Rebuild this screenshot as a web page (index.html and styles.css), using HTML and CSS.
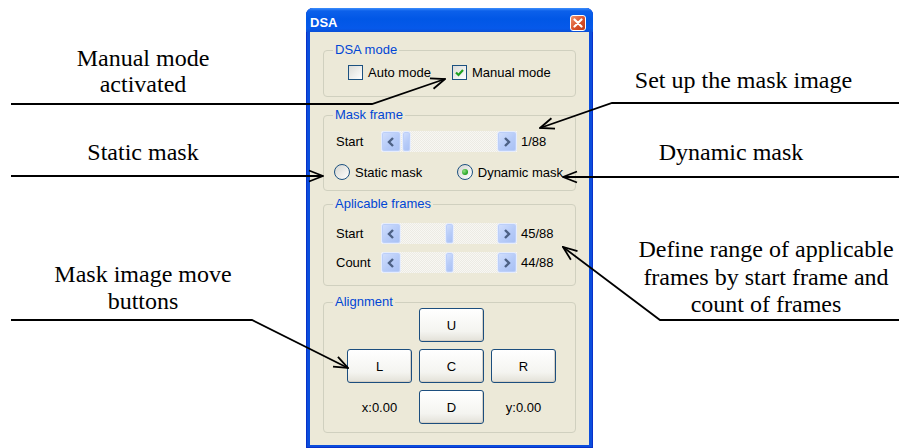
FILE: index.html
```html
<!DOCTYPE html>
<html>
<head>
	<title>DSA</title>
	<link rel="stylesheet" href="styles.css">
</head>
<body>
	<div class="page">

		<!-- Callouts on the left -->
		<div class="notes notes-left">
			<p class="note note-manual">Manual mode<br>activated</p>
			<p class="note note-static">Static mask</p>
			<p class="note note-buttons">Mask image move<br>buttons</p>
		</div>

		<!-- The DSA dialog -->
		<div class="window">
			<div class="titlebar">
				<span class="title">DSA</span>
				<span class="close">
					<svg width="10" height="10" viewBox="0 0 10 10"><path d="M1.5,1.5 L8.5,8.5 M8.5,1.5 L1.5,8.5" stroke="#fff" stroke-width="2.2" stroke-linecap="round"/></svg>
				</span>
			</div>

			<div class="client">
				<fieldset class="group group-mode">
					<legend>DSA mode</legend>
					<div class="check-row">
						<label class="check check-auto"><span class="box"></span>Auto mode</label>
						<label class="check"><span class="box"><svg width="13" height="13" viewBox="0 0 13 13"><path d="M3,6.5 L5.5,9 L10,4" fill="none" stroke="#21A121" stroke-width="2.2"/></svg></span>Manual mode</label>
					</div>
				</fieldset>

				<fieldset class="group group-mask">
					<legend>Mask frame</legend>
					<div class="scroll-row">
						<span class="scroll-label">Start</span>
						<div class="scroll">
							<span class="scroll-btn"><svg width="10" height="12" viewBox="0 0 10 12"><path d="M7,2 L3,6 L7,10" fill="none" stroke="#4D6185" stroke-width="2.4"/></svg></span>
							<span class="track"><span class="thumb" style="margin-left: 1px"></span></span>
							<span class="scroll-btn"><svg width="10" height="12" viewBox="0 0 10 12"><path d="M3,2 L7,6 L3,10" fill="none" stroke="#4D6185" stroke-width="2.4"/></svg></span>
						</div>
						<span class="scroll-value">1/88</span>
					</div>
					<div class="radio-row">
						<label class="radio radio-static"><span class="ring"></span>Static mask</label>
						<label class="radio"><span class="ring"><span class="dot"></span></span>Dynamic mask</label>
					</div>
				</fieldset>

				<fieldset class="group group-frames">
					<legend>Aplicable frames</legend>
					<div class="scroll-row">
						<span class="scroll-label">Start</span>
						<div class="scroll">
							<span class="scroll-btn"><svg width="10" height="12" viewBox="0 0 10 12"><path d="M7,2 L3,6 L7,10" fill="none" stroke="#4D6185" stroke-width="2.4"/></svg></span>
							<span class="track"><span class="thumb" style="margin-left: 44px"></span></span>
							<span class="scroll-btn"><svg width="10" height="12" viewBox="0 0 10 12"><path d="M3,2 L7,6 L3,10" fill="none" stroke="#4D6185" stroke-width="2.4"/></svg></span>
						</div>
						<span class="scroll-value">45/88</span>
					</div>
					<div class="scroll-row scroll-row-next">
						<span class="scroll-label">Count</span>
						<div class="scroll">
							<span class="scroll-btn"><svg width="10" height="12" viewBox="0 0 10 12"><path d="M7,2 L3,6 L7,10" fill="none" stroke="#4D6185" stroke-width="2.4"/></svg></span>
							<span class="track"><span class="thumb" style="margin-left: 44px"></span></span>
							<span class="scroll-btn"><svg width="10" height="12" viewBox="0 0 10 12"><path d="M3,2 L7,6 L3,10" fill="none" stroke="#4D6185" stroke-width="2.4"/></svg></span>
						</div>
						<span class="scroll-value">44/88</span>
					</div>
				</fieldset>

				<fieldset class="group group-align">
					<legend>Alignment</legend>
					<div class="pad">
						<button class="btn btn-up">U</button>
						<button class="btn btn-left">L</button>
						<button class="btn btn-center">C</button>
						<button class="btn btn-right">R</button>
						<span class="coord coord-x">x:0.00</span>
						<button class="btn btn-down">D</button>
						<span class="coord coord-y">y:0.00</span>
					</div>
				</fieldset>
			</div>
		</div>

		<!-- Callouts on the right -->
		<div class="notes notes-right">
			<p class="note note-mask">Set up the mask image</p>
			<p class="note note-dynamic">Dynamic mask</p>
			<p class="note note-range">Define range of applicable<br>frames by start frame and<br>count of frames</p>
		</div>
	</div>

	<!-- Arrows drawn over the page -->
	<svg class="arrows" width="899" height="448" viewBox="0 0 899 448">
		<defs>
			<marker id="head" markerUnits="userSpaceOnUse" markerWidth="16" markerHeight="14" viewBox="0 0 16 14" refX="15" refY="7" orient="auto">
				<path d="M1,1.5 L15,7 L1,12.5" fill="none" stroke="#000" stroke-width="1.8"/>
			</marker>
		</defs>
		<g fill="none" stroke="#000" stroke-width="1.8">
			<polyline points="11,104 372,104 445,79" marker-end="url(#head)"/>
			<polyline points="899,103 612,103 540,128" marker-end="url(#head)"/>
			<polyline points="11,176 323,176" marker-end="url(#head)"/>
			<polyline points="899,177 563,177" marker-end="url(#head)"/>
			<polyline points="899,320 660,320 563,247" marker-end="url(#head)"/>
			<polyline points="11,320 252,320 348,368" marker-end="url(#head)"/>
		</g>
	</svg>
</body>
</html>
```

FILE: styles.css
```css
body {
	margin: 0;
	width: 899px;
	height: 448px;
	overflow: hidden;
	position: relative;
	background: #fff;
	font-family: "Liberation Serif", "Times New Roman", serif;
}

.page {
	display: grid;
	grid-template-columns: 306px 287px 1fr;
	height: 448px;
}

/* Callout texts */
.note {
	margin: 0;
	font-size: 24px;
	line-height: 26px;
	color: #000;
	text-align: center;
}

.notes-left {
	padding-right: 20px;
}

.note-manual {
	margin-top: 45px;
}

.note-static {
	margin-top: 42px;
}

.note-buttons {
	margin-top: 96px;
	line-height: 27px;
}

.note-mask {
	margin-top: 67px;
	padding-right: 5px;
}

.note-dynamic {
	margin-top: 46px;
	padding-right: 30px;
}

.note-range {
	margin-top: 71px;
	padding-left: 40px;
	line-height: 27.5px;
}

.arrows {
	position: absolute;
	left: 0;
	top: 0;
	pointer-events: none;
}

/* Window frame */
.window {
	margin-top: 8px;
	height: 440px;
	box-sizing: border-box;
	display: flex;
	flex-direction: column;
	padding: 0 4px 3px;
	background: #0B4DDC;
	box-shadow: inset 1px 0 0 #0831C9, inset -1px 0 0 #0831C9, inset 0 -1px 0 #0831C9;
	border-radius: 7px 7px 0 0;
	font-family: "Liberation Sans", Arial, sans-serif;
	font-size: 13px;
	color: #000;
	white-space: nowrap;
}

.titlebar {
	height: 24px;
	box-sizing: border-box;
	margin: 0 -4px;
	padding: 5px 7px 0 4px;
	display: flex;
	align-items: center;
	justify-content: space-between;
	background: linear-gradient(#3C8EFC 0, #0C60EA 3px, #0157E6 45%, #0659EA 85%, #0A4FD6 100%);
	border-radius: 7px 7px 0 0;
}

.title {
	color: #fff;
	font-weight: bold;
	font-size: 13px;
}

.close {
	width: 16px;
	height: 16px;
	box-sizing: border-box;
	border: 1px solid #fff;
	border-radius: 3px;
	background: linear-gradient(135deg, #F0936E, #D9512B 55%, #C13A17);
	display: flex;
	align-items: center;
	justify-content: center;
}

.client {
	flex: 1;
	background: #ECE9D8;
	display: flex;
	flex-direction: column;
}

/* Group boxes */
.group {
	margin: 0 13px;
	padding: 0 12px;
	border: 1px solid #D0D0BF;
	border-radius: 4px;
	min-width: 0;
}

.group legend {
	margin-left: -3px;
	padding: 0 2px;
	line-height: 14px;
	color: #0046D5;
}

.group-mode {
	margin-top: 11px;
	padding-top: 7px;
	padding-bottom: 16px;
}

.group-mask {
	margin-top: 11px;
	padding-top: 9px;
	padding-bottom: 10px;
}

.group-frames {
	margin-top: 6px;
	padding-top: 12px;
	padding-bottom: 12px;
}

.group-align {
	margin-top: 9px;
	padding-top: 0;
	padding-bottom: 8px;
}

/* Check boxes */
.check-row {
	display: flex;
	margin-left: 12px;
	height: 16px;
}

.check {
	display: flex;
	align-items: center;
	gap: 5px;
}

.check-auto {
	width: 104px;
}

.box {
	width: 15px;
	height: 15px;
	box-sizing: border-box;
	border: 1px solid #1C5180;
	background: linear-gradient(135deg, #DCDCD7, #FFFFFF);
	display: flex;
	align-items: center;
	justify-content: center;
}

/* Radio buttons */
.radio-row {
	display: flex;
	margin: 12px 0 0 -2px;
	height: 16px;
}

.radio {
	display: flex;
	align-items: center;
	gap: 5px;
}

.radio-static {
	width: 123px;
}

.ring {
	width: 16px;
	height: 16px;
	box-sizing: border-box;
	border: 1px solid #1C5180;
	border-radius: 50%;
	background: linear-gradient(135deg, #D6D6D0, #FFFFFF);
	display: flex;
	align-items: center;
	justify-content: center;
}

.dot {
	width: 6px;
	height: 6px;
	border-radius: 50%;
	background: radial-gradient(circle at 35% 35%, #8FE27F, #21A121 70%);
}

/* Scroll bars */
.scroll-row {
	display: flex;
	align-items: center;
	height: 21px;
}

.scroll-row-next {
	margin-top: 8px;
}

.scroll-label {
	width: 45px;
}

.scroll {
	display: flex;
	width: 136px;
	height: 21px;
	background: repeating-conic-gradient(#F8F7F3 0 25%, #ECEBE4 0 50%) 0 0 / 2px 2px;
}

.scroll-btn,
.thumb {
	height: 21px;
	box-sizing: border-box;
	border: 1px solid #E6EDFD;
	border-radius: 3px;
	background: linear-gradient(135deg, #D3E0FD, #B6CBF8 55%, #A8C0F4);
	box-shadow: inset 0 0 0 1px #BCCFF9;
}

.scroll-btn {
	width: 20px;
	display: flex;
	align-items: center;
	justify-content: center;
}

.track {
	flex: 1;
	display: flex;
}

.thumb {
	width: 9px;
}

.scroll-value {
	margin-left: 4px;
}

/* Alignment pad */
.pad {
	display: grid;
	grid-template-columns: repeat(3, 65px);
	grid-template-rows: repeat(3, 34px);
	gap: 7px;
	margin: -1px 0 0 11px;
}

.btn {
	font-family: inherit;
	font-size: 13px;
	color: #000;
	border: 1px solid #1C4E7E;
	border-radius: 3px;
	background: linear-gradient(#FFFFFF, #F4F4F0 70%, #E3E1D8);
	box-shadow: inset -1px -1px 0 #D6D0C5;
	padding: 0;
}

.btn-up {
	grid-column: 2;
	grid-row: 1;
}

.btn-left {
	grid-column: 1;
	grid-row: 2;
}

.btn-center {
	grid-column: 2;
	grid-row: 2;
}

.btn-right {
	grid-column: 3;
	grid-row: 2;
}

.btn-down {
	grid-column: 2;
	grid-row: 3;
}

.coord {
	display: flex;
	align-items: center;
	justify-content: center;
}

.coord-x {
	grid-column: 1;
	grid-row: 3;
}

.coord-y {
	grid-column: 3;
	grid-row: 3;
}
```
